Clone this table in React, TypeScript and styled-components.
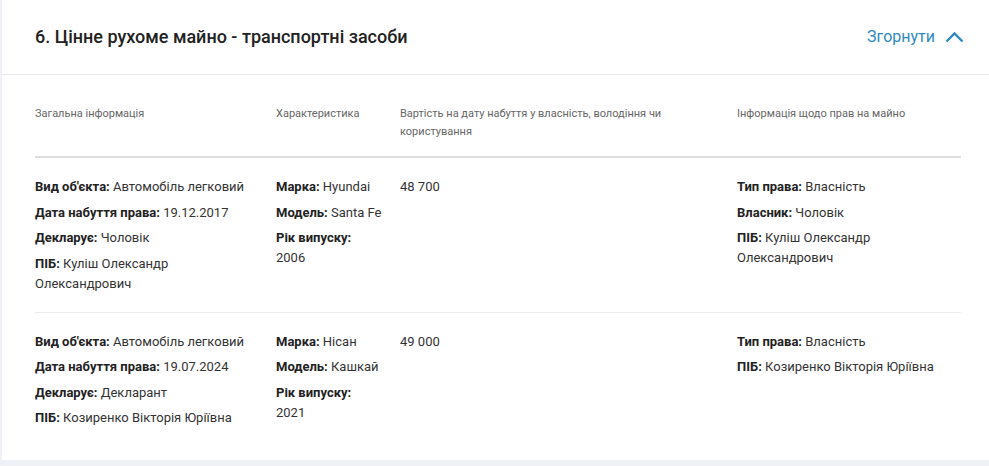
import React from "react";
import styled, { createGlobalStyle } from "styled-components";

const Global = createGlobalStyle`
  html, body { margin: 0; padding: 0; background: #eff1f6; }
  body { font-family: Roboto, "Noto Sans", Arial, sans-serif; }
  * { box-sizing: border-box; }
`;

const Page = styled.div`
  padding: 0 0 6px 2px;
  width: 989px;
`;

const Card = styled.section`
  background: #ffffff;
`;

const Header = styled.header`
  height: 75px;
  display: flex;
  align-items: center;
  justify-content: space-between;
  padding: 0 25px 1px 33px;
  border-bottom: 1px solid #e8e9ee;
`;

const Title = styled.h2`
  margin: 0;
  font-size: 18px;
  font-weight: 500;
  color: #222;
`;

const Toggle = styled.button`
  display: flex;
  align-items: center;
  gap: 10px;
  background: none;
  border: 0;
  padding: 0;
  font-family: inherit;
  font-size: 16px;
  color: #2f8ac0;
  cursor: pointer;
`;

const Body = styled.div`
  padding: 30px 28px 32px 33px;
`;

const Grid = styled.div<{ $head?: boolean; $last?: boolean }>`
  display: grid;
  grid-template-columns: 241px 124px 337px 1fr;
  padding: ${(p) => (p.$head ? "0 0 15px" : p.$last ? "19px 0 0" : "19px 0 18px")};
  border-bottom: ${(p) =>
    p.$head ? "2px solid #dedede" : p.$last ? "none" : "1px solid #ebebeb"};
`;

const HeadCell = styled.div`
  font-size: 11px;
  line-height: 18px;
  color: #666;
  padding-right: 16px;
`;

const Cell = styled.div`
  display: flex;
  flex-direction: column;
  gap: 5.5px;
  padding-right: 16px;
`;

const Item = styled.div`
  font-size: 13px;
  line-height: 20px;
  color: #333;
`;

const Label = styled.b<{ $block?: boolean }>`
  font-weight: 700;
  color: #222;
  display: ${(p) => (p.$block ? "block" : "inline")};
`;

type Pair = [string, string, boolean?];

const F = ({ pairs }: { pairs: Pair[] }) => (
  <Cell>
    {pairs.map(([l, v, block], i) => (
      <Item key={i}>
        {l ? <Label $block={block}>{l}</Label> : null}
        {l && !block ? " " : ""}
        {v}
      </Item>
    ))}
  </Cell>
);

const rows: { a: Pair[]; b: Pair[]; c: string; d: Pair[] }[] = [
  {
    a: [
      ["Вид об'єкта:", "Автомобіль легковий"],
      ["Дата набуття права:", "19.12.2017"],
      ["Декларує:", "Чоловік"],
      ["ПІБ:", "Куліш Олександр Олександрович"],
    ],
    b: [
      ["Марка:", "Hyundai"],
      ["Модель:", "Santa Fe"],
      ["Рік випуску:", "2006", true],
    ],
    c: "48 700",
    d: [
      ["Тип права:", "Власність"],
      ["Власник:", "Чоловік"],
      ["ПІБ:", "Куліш Олександр Олександрович"],
    ],
  },
  {
    a: [
      ["Вид об'єкта:", "Автомобіль легковий"],
      ["Дата набуття права:", "19.07.2024"],
      ["Декларує:", "Декларант"],
      ["ПІБ:", "Козиренко Вікторія Юріївна"],
    ],
    b: [
      ["Марка:", "Нісан"],
      ["Модель:", "Кашкай"],
      ["Рік випуску:", "2021", true],
    ],
    c: "49 000",
    d: [
      ["Тип права:", "Власність"],
      ["ПІБ:", "Козиренко Вікторія Юріївна"],
    ],
  },
];

const Chevron = () => (
  <svg width="19" height="12" viewBox="0 0 19 12" fill="none">
    <path d="M1.5 10.5 L9.5 2.5 L17.5 10.5" stroke="#2f8ac0" strokeWidth="2.4" />
  </svg>
);

export default function App() {
  return (
    <Page>
      <Global />
      <Card>
        <Header>
          <Title>6. Цінне рухоме майно - транспортні засоби</Title>
          <Toggle>
            Згорнути <Chevron />
          </Toggle>
        </Header>
        <Body>
          <Grid $head>
            <HeadCell>Загальна інформація</HeadCell>
            <HeadCell>Характеристика</HeadCell>
            <HeadCell>Вартість на дату набуття у власність, володіння чи користування</HeadCell>
            <HeadCell>Інформація щодо прав на майно</HeadCell>
          </Grid>
          {rows.map((r, i) => (
            <Grid key={i} $last={i === rows.length - 1}>
              <F pairs={r.a} />
              <F pairs={r.b} />
              <F pairs={[["", r.c]]} />
              <F pairs={r.d} />
            </Grid>
          ))}
        </Body>
      </Card>
    </Page>
  );
}
